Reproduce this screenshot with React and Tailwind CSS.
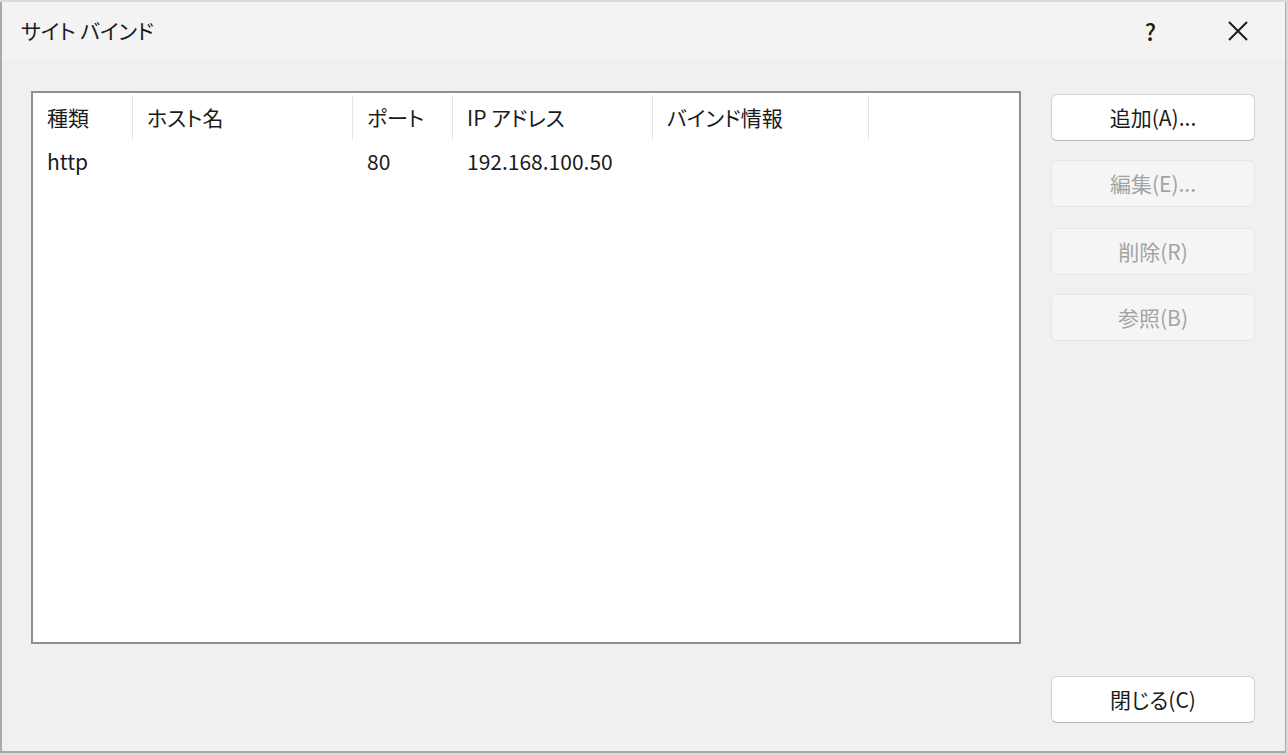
import { useState } from "react";

const font = {
  fontFamily: '"Noto Sans CJK JP", "Noto Sans", sans-serif',
};

const columns = [
  { key: "type", label: "種類", w: "w-[100px]" },
  { key: "host", label: "ホスト名", w: "w-[220px]" },
  { key: "port", label: "ポート", w: "w-[100px]" },
  { key: "ip", label: "IP アドレス", w: "w-[200px]" },
  { key: "info", label: "バインド情報", w: "w-[216px]" },
];

const bindings = [
  { type: "http", host: "", port: "80", ip: "192.168.100.50", info: "" },
];

function DialogButton({ children, disabled, className = "" }) {
  return (
    <button
      disabled={disabled}
      className={`h-[47px] w-[204px] rounded-[6px] text-[21px] [font-feature-settings:'palt'] ${
        disabled
          ? "bg-[#f5f5f5] border border-[#e6e6e6] text-[#a3a3a3]"
          : "bg-white border border-[#d2d2d2] border-b-[#b4b4b4] text-[#1b1b1b]"
      } ${className}`}
    >
      {children}
    </button>
  );
}

export default function App() {
  const [selected] = useState(null);

  return (
    <div className="w-[1288px] h-[755px] bg-[#d9d9d9] pt-[2px] overflow-hidden" style={font}>
      <div className="h-[751px] mr-[2px] flex flex-col border-l-2 border-r border-b-2 border-[#a9a9a9] bg-[#f0f0f0]">
        {/* Title bar */}
        <div className="h-[58px] bg-[#f3f3f3] flex items-center pl-[19px] pr-[36px]">
          <span className="text-[21px] text-[#1b1b1b] [font-feature-settings:'palt']">
            サイト バインド
          </span>
          <span className="ml-auto text-[23px] font-medium text-[#1b1b1b] mr-[71px]">?</span>
          <svg width="22" height="22" viewBox="0 0 22 22" className="text-[#1b1b1b]">
            <path d="M2 2 L20 20 M20 2 L2 20" stroke="currentColor" strokeWidth="2" />
          </svg>
        </div>

        {/* Body */}
        <div className="flex-1 flex gap-[30px] pl-[29px] pt-[31px] pb-[28px]">
          <div className="w-[990px] h-[553px] bg-white border-2 border-[#8c9097]">
            <div className="flex h-[49px] pt-[2px]">
              {columns.map((c) => (
                <div
                  key={c.key}
                  className={`${c.w} h-[45px] border-r border-[#e6e6e6] flex items-center pl-[14px] text-[21px] text-[#1b1b1b] [font-feature-settings:'palt']`}
                >
                  {c.label}
                </div>
              ))}
            </div>
            {bindings.map((b, i) => (
              <div
                key={i}
                className={`flex h-[40px] items-center text-[21px] text-[#1b1b1b] ${
                  selected === i ? "bg-[#cce8ff]" : ""
                }`}
              >
                {columns.map((c) => (
                  <div key={c.key} className={`${c.w} pl-[14px]`}>
                    {b[c.key]}
                  </div>
                ))}
              </div>
            ))}
          </div>

          <div className="flex flex-col pt-[3px]">
            <DialogButton>追加(A)...</DialogButton>
            <DialogButton disabled className="mt-[19px]">編集(E)...</DialogButton>
            <DialogButton disabled className="mt-[21px]">削除(R)</DialogButton>
            <DialogButton disabled className="mt-[19px]">参照(B)</DialogButton>
            <DialogButton className="mt-auto">閉じる(C)</DialogButton>
          </div>
        </div>
      </div>
    </div>
  );
}
